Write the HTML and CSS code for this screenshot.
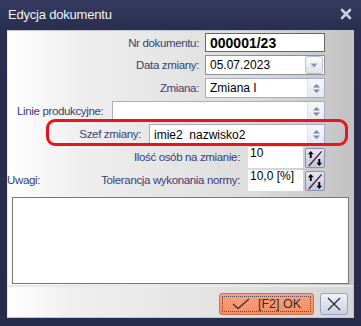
FILE: index.html
```html
<!DOCTYPE html>
<html lang="pl">
<head>
    <meta charset="UTF-8">
    <meta name="viewport" content="width=device-width, initial-scale=1.0">
    <title>Edycja dokumentu</title>
    <link rel="stylesheet" href="styles.css">
</head>
<body>
    <div class="window">
        <div class="titlebar">
            <div class="title">Edycja dokumentu</div>
            <svg class="title-close" width="12" height="12" viewBox="0 0 12 12">
                <path d="M2 2 L10 10 M10 2 L2 10" stroke="#c9cde0" stroke-width="2.6" stroke-linecap="round"/>
            </svg>
        </div>

        <div class="client">
            <div class="form">
                <div class="row first">
                    <span class="label">Nr dokumentu:</span>
                    <div class="field dark w120"><span class="bold">000001/23</span></div>
                </div>

                <div class="row">
                    <span class="label">Data zmiany:</span>
                    <div class="field gray w120">
                        <span class="value">05.07.2023</span>
                        <div class="drop">
                            <svg width="8" height="5" viewBox="0 0 8 5"><path d="M0.5 0.5 L7.5 0.5 L4 4.5Z" fill="#8f96b0"/></svg>
                        </div>
                    </div>
                </div>

                <div class="row">
                    <span class="label">Zmiana:</span>
                    <div class="field blue w120">
                        <span class="value">Zmiana I</span>
                        <div class="spin">
                            <svg width="9" height="11" viewBox="0 0 9 11"><path d="M1 4.5 L4.5 1 L8 4.5Z M1 6.5 L4.5 10 L8 6.5Z" fill="#7d86aa"/></svg>
                        </div>
                    </div>
                </div>

                <div class="row">
                    <span class="label left">Linie produkcyjne:</span>
                    <div class="field blue w213">
                        <span class="value"></span>
                        <div class="spin">
                            <svg width="9" height="11" viewBox="0 0 9 11"><path d="M1 4.5 L4.5 1 L8 4.5Z M1 6.5 L4.5 10 L8 6.5Z" fill="#7d86aa"/></svg>
                        </div>
                    </div>
                </div>

                <div class="row">
                    <span class="label wide">Szef zmiany:</span>
                    <div class="field blue w176 tall">
                        <span class="value">imie2&nbsp; nazwisko2</span>
                        <div class="spin">
                            <svg width="9" height="11" viewBox="0 0 9 11"><path d="M1 4.5 L4.5 1 L8 4.5Z M1 6.5 L4.5 10 L8 6.5Z" fill="#7d86aa"/></svg>
                        </div>
                    </div>
                </div>

                <div class="row">
                    <span class="label wide">Ilość osób na zmianie:</span>
                    <div class="field plain">10</div>
                    <div class="swap">
                        <svg width="19" height="19" viewBox="0 0 19 19">
                            <path d="M3 17.5 L16.5 2" stroke="#5c1b2c" stroke-width="1.5"/>
                            <path d="M5 9 L5 3.5" stroke="#000" stroke-width="2"/>
                            <path d="M2 5 L5 1.5 L8 5Z" fill="#000"/>
                            <path d="M14 10 L14 15.5" stroke="#000" stroke-width="2"/>
                            <path d="M11 14 L14 17.5 L17 14Z" fill="#000"/>
                        </svg>
                    </div>
                </div>

                <div class="row">
                    <span class="label uwagi">Uwagi:</span>
                    <span class="label wide">Tolerancja wykonania normy:</span>
                    <div class="field plain">10,0 [%]</div>
                    <div class="swap">
                        <svg width="19" height="19" viewBox="0 0 19 19">
                            <path d="M3 17.5 L16.5 2" stroke="#5c1b2c" stroke-width="1.5"/>
                            <path d="M5 9 L5 3.5" stroke="#000" stroke-width="2"/>
                            <path d="M2 5 L5 1.5 L8 5Z" fill="#000"/>
                            <path d="M14 10 L14 15.5" stroke="#000" stroke-width="2"/>
                            <path d="M11 14 L14 17.5 L17 14Z" fill="#000"/>
                        </svg>
                    </div>
                </div>

                <div class="notes"></div>
            </div>

            <div class="footer">
                <div class="btn ok">
                    <div class="focus">
                        <svg width="18" height="12" viewBox="0 0 18 12"><path d="M1 6 L6 10.5 L17 1" stroke="#3a3a3a" stroke-width="1.4" fill="none"/></svg>
                        <span>[F2] OK</span>
                    </div>
                </div>
                <div class="btn cancel">
                    <svg width="14" height="14" viewBox="0 0 14 14"><path d="M1 1 L13 13 M13 1 L1 13" stroke="#2c2c2c" stroke-width="1.3"/></svg>
                </div>
            </div>
        </div>

        <!-- zaznaczenie na zrzucie -->
        <div class="highlight"></div>
    </div>
</body>
</html>
```

FILE: styles.css
```css
body {
    margin: 0;
    padding: 0;
    background-color: #272c4a;
    font-family: "Liberation Sans", Arial, sans-serif;
}

.window {
    position: relative;
    width: 361px;
    height: 326px;
    box-sizing: border-box;
    padding: 0 7px 8px 7px;
    background: linear-gradient(#363c60, #2a2f4f 28px, #272c4a);
    display: flex;
    flex-direction: column;
}

.titlebar {
    height: 28px;
    display: flex;
    align-items: center;
    justify-content: space-between;
    padding: 0 2px 2px 1px;
}

.title {
    color: #f2f3f8;
    font-size: 13px;
    letter-spacing: -0.2px;
}

.client {
    flex: 1;
    display: flex;
    flex-direction: column;
    border: 1px solid #c3c6d3;
    border-left-color: #e8e9ee;
}

/* formularz z polami */
.form {
    flex: 1;
    padding-top: 2px;
    background: linear-gradient(90deg, #ffffff 0, #efefef 70px, #dddddd 240px, #c3c3c3 340px);
}

.row {
    height: 23px;
    display: flex;
    align-items: flex-start;
    justify-content: flex-end;
    padding-right: 28px;
}

.row.first {
    height: 22px;
}

.label {
    color: #3a4072;
    font-size: 11.5px;
    letter-spacing: -0.35px;
    margin-right: 6px;
    line-height: 21px;
}

.label.left {
    flex: 1;
    padding-left: 9px;
}

.label.wide {
    margin-right: 8px;
}

.label.uwagi {
    flex: 1;
    margin-left: -1px;
}

.field {
    box-sizing: border-box;
    height: 20px;
    background-color: #fff;
    display: flex;
    align-items: center;
    padding-left: 4px;
    font-size: 12px;
    color: #000;
}

.field .value {
    flex: 1;
}

.field.dark {
    height: 19px;
    border: 1px solid #666;
}

.field.gray {
    border: 1px solid #8f9094;
    padding-right: 1px;
}

.field.blue {
    border: 1px solid #a6accb;
}

.field.tall {
    height: 21px;
}

.field.plain {
    width: 55px;
    height: 21px;
    align-items: flex-start;
    line-height: 13px;
    padding-left: 2px;
    margin-right: 2px;
}

.w120 { width: 120px; }
.w176 { width: 176px; }
.w213 { width: 213px; }

.bold {
    font-weight: bold;
    font-size: 14px;
}

.drop {
    width: 16px;
    height: 16px;
    border: 1px solid #b9bdcd;
    border-radius: 3px;
    background: linear-gradient(#f8f9fb, #dfe2ea);
    display: flex;
    align-items: center;
    justify-content: center;
}

.spin {
    width: 16px;
    height: 100%;
    background: linear-gradient(#f6f7fa, #e6e8ef);
    border-left: 1px solid #e0e2ea;
    display: flex;
    align-items: center;
    justify-content: center;
}

.swap {
    box-sizing: border-box;
    width: 20px;
    height: 20px;
    margin-top: 1px;
    border: 1px solid #8990b0;
    border-radius: 2px;
    background: linear-gradient(#e4e7f2, #c3c8dc);
    display: flex;
    align-items: center;
    justify-content: center;
}

.swap svg {
    display: block;
}

.notes {
    height: 87px;
    margin: 4px 4px 0 4px;
    background-color: #fff;
    border: 1px solid #777;
    box-sizing: border-box;
}

/* pasek z przyciskami */
.footer {
    height: 32px;
    border-top: 2px solid #e9e9e9;
    box-sizing: border-box;
    display: flex;
    justify-content: flex-end;
    align-items: flex-start;
    gap: 6px;
    padding: 6px 5px 0 0;
    background: linear-gradient(90deg, #ffffff 0, #f0f0f0 60px, #e0e0e0 240px, #d6d6d6 345px);
}

.btn {
    box-sizing: border-box;
    height: 22px;
    border-radius: 3px;
    display: flex;
    align-items: center;
    justify-content: center;
}

.btn.ok {
    width: 95px;
    padding: 2px;
    border: 1px solid #c87250;
    background: linear-gradient(#fba07c, #f48d63);
}

.btn.ok .focus {
    flex: 1;
    height: 100%;
    box-sizing: border-box;
    border: 1px dotted #4a4a6a;
    display: flex;
    align-items: center;
    justify-content: center;
    gap: 8px;
    color: #2e2e2e;
    font-size: 12.5px;
}

.btn.cancel {
    width: 28px;
    border: 1px solid #9ba1c2;
    background: linear-gradient(#eff1f8, #cbd0e3);
}

.highlight {
    position: absolute;
    left: 46px;
    top: 119px;
    width: 302px;
    height: 27px;
    box-sizing: border-box;
    border: 3px solid #e8141c;
    border-radius: 9px;
}
```
